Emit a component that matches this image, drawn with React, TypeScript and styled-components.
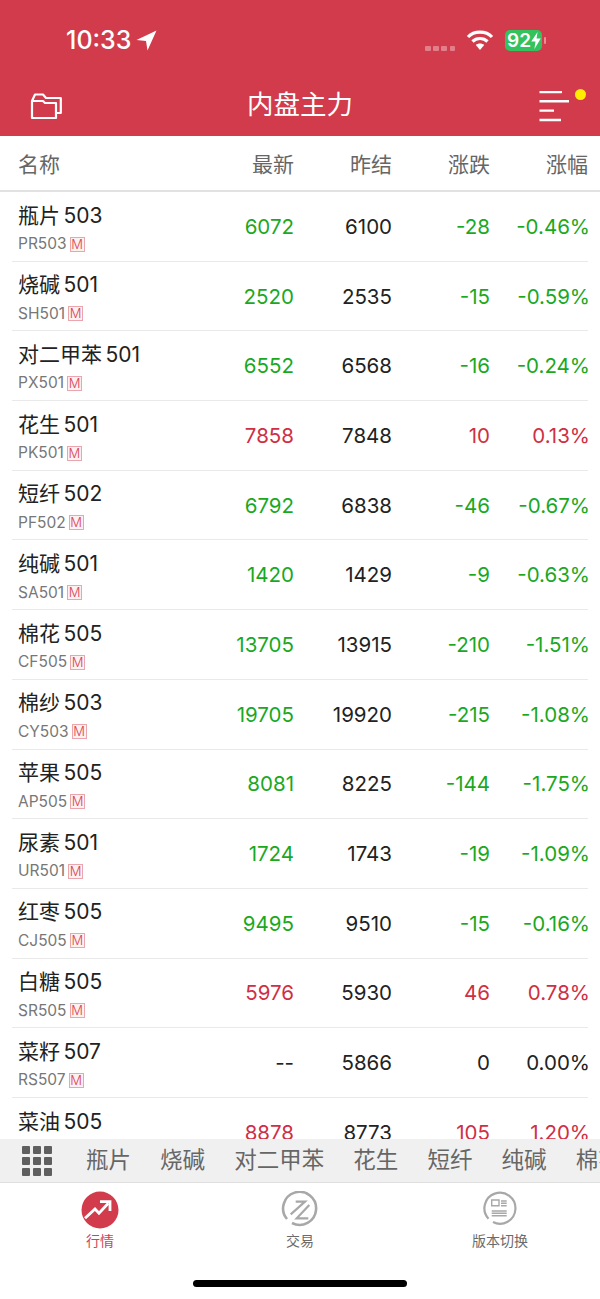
import React from "react";
import styled, { createGlobalStyle } from "styled-components";

const RED = "#d13b4b";
const UP = "#cf2f45";
const DOWN = "#1aa81f";
const FONT = `Inter, "Noto Sans CJK SC", sans-serif`;

const Global = createGlobalStyle`
    html, body { margin: 0; padding: 0; background: #fff; }
    body { font-family: ${FONT}; }
`;

const Page = styled.div`
    width: 600px;
    height: 1299px;
    display: flex;
    flex-direction: column;
    overflow: hidden;
    background: #fff;
`;

const Header = styled.div`
    height: 136px;
    flex: none;
    background: ${RED};
    color: #fff;
    display: flex;
    flex-direction: column;
`;

const StatusBar = styled.div`
    height: 80px;
    padding: 27px 58px 0 66px;
    box-sizing: border-box;
    display: flex;
    align-items: flex-start;
    justify-content: space-between;
`;

const Clock = styled.div`
    display: flex;
    align-items: center;
    gap: 5px;
    font-size: 25px;
    line-height: 26px;
    font-weight: 500;
`;

const StatusRight = styled.div`
    display: flex;
    align-items: center;
    height: 26px;
`;

const Dots = styled.div`
    display: flex;
    gap: 2.6px;
    margin: 16px 11px 0 0;
`;

const Dot = styled.span`
    width: 5.5px;
    height: 5px;
    border-radius: 1px;
    background: #e27f8a;
`;

const Battery = styled.div`
    width: 37px;
    height: 21px;
    margin-left: 11px;
    background: #34c25f;
    border-radius: 5px;
    font-size: 19px;
    font-weight: 600;
    line-height: 21px;
    padding-left: 2px;
    box-sizing: border-box;
    display: flex;
    align-items: center;
    position: relative;
`;

const BatteryCap = styled.span`
    position: absolute;
    right: -4px;
    top: 7px;
    width: 2px;
    height: 7px;
    border-radius: 1px;
    background: #e88c96;
`;

const NavBar = styled.div`
    height: 56px;
    padding: 0 16px 0 29px;
    display: flex;
    align-items: center;
    justify-content: space-between;
    position: relative;
`;

const Title = styled.div`
    position: absolute;
    left: 0;
    right: 0;
    top: 8px;
    text-align: center;
    font-size: 26.5px;
    line-height: 32px;
`;

const MenuIcon = styled.svg`
    margin-right: 13px;
`;

const TableHead = styled.div`
    height: 56px;
    flex: none;
    display: flex;
    align-items: center;
    box-sizing: border-box;
    padding-right: 12px;
    border-bottom: 2px solid #e2e2e2;
    color: #666;
    font-size: 21px;
`;

const NameCol = styled.div`
    width: 190px;
    flex: none;
    padding-left: 18px;
    box-sizing: border-box;
`;

const NumCol = styled.div<{ $w: number; $color?: string }>`
    width: ${(p) => p.$w}px;
    flex: none;
    text-align: right;
    color: ${(p) => p.$color || "inherit"};
`;

// the percent glyph carries side bearing, pull it back onto the right edge
const PctCol = styled(NumCol)`
    margin-right: -2px;
`;

const List = styled.div`
    flex: 1;
    min-height: 0;
    overflow: hidden;
`;

const Row = styled.div`
    height: 69.7px;
    margin: 0 12px;
    display: flex;
    align-items: center;
    box-sizing: border-box;
    border-bottom: 1px solid #e9e9e9;
    font-size: 20.5px;
    color: #222;
`;

const RowName = styled.div`
    width: 178px;
    flex: none;
    padding: 3px 0 0 6px;
    box-sizing: border-box;
`;

const Name = styled.div`
    font-size: 21px;
    line-height: 26px;
    word-spacing: -2.5px;
    color: #222;
`;

const Code = styled.div`
    display: flex;
    align-items: center;
    gap: 3px;
    font-size: 15.5px;
    line-height: 18px;
    margin-top: 6.5px;
    color: #777;
`;

const MBadge = styled.span`
    width: 15px;
    height: 15px;
    box-sizing: border-box;
    border: 1px solid #eba5ad;
    background: #fdf0f1;
    color: #d64455;
    font-size: 13px;
    font-weight: 300;
    line-height: 13px;
    text-align: center;
`;

const QuickBar = styled.div`
    height: 44px;
    flex: none;
    background: #f0f0f0;
    border-bottom: 1px solid #dedede;
    box-sizing: border-box;
    display: flex;
    align-items: center;
    overflow: hidden;
    white-space: nowrap;
    color: #666;
    font-size: 22.5px;
    line-height: 36px;
    padding-bottom: 2px;
`;

const Grid = styled.div`
    width: 30px;
    margin: 2px 34px 0 22px;
    flex: none;
    display: grid;
    grid-template-columns: repeat(3, 8px);
    grid-auto-rows: 8px;
    gap: 3px;
`;

const GridCell = styled.span`
    background: #5f5f5f;
    border-radius: 1px;
`;

const Chip = styled.span`
    margin-right: 29.1px;
    flex: none;
`;

const TabBar = styled.div`
    height: 116px;
    flex: none;
    background: #fff;
    display: flex;
    flex-direction: column;
`;

const Tabs = styled.div`
    height: 97px;
    display: flex;
    justify-content: space-between;
    padding: 8px 0 0;
    box-sizing: border-box;
`;

const Tab = styled.div<{ $active?: boolean }>`
    width: 200px;
    display: flex;
    flex-direction: column;
    align-items: center;
    gap: 3px;
    font-size: 14px;
    line-height: 18px;
    color: ${(p) => (p.$active ? "#cf4258" : "#6b6b6b")};
`;

const HomeIndicator = styled.div`
    width: 214px;
    height: 7px;
    margin: 0 auto;
    border-radius: 4px;
    background: #000;
`;

const IconBox = styled.div`
    width: 38px;
    height: 38px;
`;

const YellowDot = styled.span`
    position: absolute;
    top: 8.5px;
    right: 14px;
    width: 11px;
    height: 11px;
    border-radius: 50%;
    background: #ffee00;
`;

type Quote = [string, string, string, string, string, string];

const quotes: Quote[] = [
    ["瓶片 503", "PR503", "6072", "6100", "-28", "-0.46%"],
    ["烧碱 501", "SH501", "2520", "2535", "-15", "-0.59%"],
    ["对二甲苯 501", "PX501", "6552", "6568", "-16", "-0.24%"],
    ["花生 501", "PK501", "7858", "7848", "10", "0.13%"],
    ["短纤 502", "PF502", "6792", "6838", "-46", "-0.67%"],
    ["纯碱 501", "SA501", "1420", "1429", "-9", "-0.63%"],
    ["棉花 505", "CF505", "13705", "13915", "-210", "-1.51%"],
    ["棉纱 503", "CY503", "19705", "19920", "-215", "-1.08%"],
    ["苹果 505", "AP505", "8081", "8225", "-144", "-1.75%"],
    ["尿素 501", "UR501", "1724", "1743", "-19", "-1.09%"],
    ["红枣 505", "CJ505", "9495", "9510", "-15", "-0.16%"],
    ["白糖 505", "SR505", "5976", "5930", "46", "0.78%"],
    ["菜籽 507", "RS507", "--", "5866", "0", "0.00%"],
    ["菜油 505", "OI505", "8878", "8773", "105", "1.20%"],
];

const chips = ["瓶片", "烧碱", "对二甲苯", "花生", "短纤", "纯碱", "棉花"];

const colorOf = (change: string) => {
    if (change === "0") return "#222";
    return change.startsWith("-") ? DOWN : UP;
};

const Widths = [104, 98, 98, 98];

const App = () => {
    return (
        <Page>
            <Global />
            <Header>
                <StatusBar>
                    <Clock>
                        10:33
                        <svg width="21" height="21" viewBox="0 0 21 21">
                            <path d="M20.5 0.5 L0.5 10 L10 11 L11.5 20.5 Z" fill="#fff" />
                        </svg>
                    </Clock>
                    <StatusRight>
                        <Dots>
                            <Dot />
                            <Dot />
                            <Dot />
                            <Dot />
                        </Dots>
                        <svg width="28" height="22" viewBox="0 0 28 22" fill="none" stroke="#fff" strokeWidth="3.2">
                            <path d="M2 8 C8 1.5 20 1.5 26 8" />
                            <path d="M6.5 12.5 C10.5 8.5 17.5 8.5 21.5 12.5" />
                            <path d="M14 21 L9.8 16 C12 14 16 14 18.2 16 Z" fill="#fff" stroke="none" />
                        </svg>
                        <Battery>
                            92
                            <svg width="10" height="17" viewBox="0 0 9 16">
                                <path d="M6 0 L0 9 H4 L3 16 L9 6 H5 Z" fill="#fff" />
                            </svg>
                            <BatteryCap />
                        </Battery>
                    </StatusRight>
                </StatusBar>
                <NavBar>
                    <svg width="34" height="30" viewBox="0 0 34 30" fill="none" stroke="#fff" strokeWidth="2.2" strokeLinejoin="round">
                        <path d="M3 8 L6 1.5 H14 L17 5 H31.8 V20 H27" />
                        <path d="M3 8 H14 L16 10 H27 V25 H3 Z" />
                    </svg>
                    <Title>内盘主力</Title>
                    <MenuIcon width="32" height="34" viewBox="0 0 32 34" stroke="#fff" strokeWidth="2.4">
                        <path d="M0.5 1 H23 M0.5 10.3 H30 M0.5 19.6 H15 M0.5 29 H22" />
                    </MenuIcon>
                    <YellowDot />
                </NavBar>
            </Header>
            <TableHead>
                <NameCol>名称</NameCol>
                <NumCol $w={Widths[0]}>最新</NumCol>
                <NumCol $w={Widths[1]}>昨结</NumCol>
                <NumCol $w={Widths[2]}>涨跌</NumCol>
                <NumCol $w={Widths[3]}>涨幅</NumCol>
            </TableHead>
            <List>
                {quotes.map((q) => {
                    const color = colorOf(q[4]);
                    return (
                        <Row key={q[1]}>
                            <RowName>
                                <Name>{q[0]}</Name>
                                <Code>
                                    {q[1]}
                                    <MBadge>M</MBadge>
                                </Code>
                            </RowName>
                            <NumCol $w={Widths[0]} $color={q[2] === "--" ? "#222" : color}>
                                {q[2]}
                            </NumCol>
                            <NumCol $w={Widths[1]}>{q[3]}</NumCol>
                            <NumCol $w={Widths[2]} $color={color}>
                                {q[4]}
                            </NumCol>
                            <PctCol $w={Widths[3] + 2} $color={color}>
                                {q[5]}
                            </PctCol>
                        </Row>
                    );
                })}
            </List>
            <QuickBar>
                <Grid>
                    {Array.from({ length: 9 }).map((_, i) => (
                        <GridCell key={i} />
                    ))}
                </Grid>
                {chips.map((c) => (
                    <Chip key={c}>{c}</Chip>
                ))}
            </QuickBar>
            <TabBar>
                <Tabs>
                    <Tab $active>
                        <IconBox>
                            <svg width="38" height="38" viewBox="0 0 38 38">
                                <circle cx="19" cy="19" r="18.5" fill="#d13b4b" />
                                <path d="M4 27.3 L14 18 L18 22.3 L27.3 12.3" fill="none" stroke="#fff" strokeWidth="2.8" />
                                <path d="M19 10.7 H29 V20" fill="none" stroke="#fff" strokeWidth="2.8" />
                            </svg>
                        </IconBox>
                        行情
                    </Tab>
                    <Tab>
                        <IconBox>
                            <svg width="38" height="38" viewBox="0 0 38 38" fill="none" stroke="#a8a8a8" strokeWidth="2.6">
                                <path d="M6 28 A16.5 16.5 0 1 1 11 32" />
                                <path d="M14.7 10.7 H24 L9.7 23.3" strokeWidth="2.2" />
                                <path d="M28.3 14 L15.7 27.3 H27.3" strokeWidth="2.2" />
                            </svg>
                        </IconBox>
                        交易
                    </Tab>
                    <Tab>
                        <IconBox>
                            <svg width="38" height="38" viewBox="0 0 38 38" fill="none" stroke="#a8a8a8" strokeWidth="2.2">
                                <path d="M7.5 27.7 A15.5 15.5 0 1 1 12 31.1" />
                                <path d="M10.7 9 H18 V14.7 H10.7 Z M20 10 H25.7 M20 12.3 H25.7 M20 14.7 H25.7 M10.7 20 H25.7 M10.7 22.3 H25.7 M10.7 24.7 H25.7" strokeWidth="1.4" />
                            </svg>
                        </IconBox>
                        版本切换
                    </Tab>
                </Tabs>
                <HomeIndicator />
            </TabBar>
        </Page>
    );
};

export default App;
